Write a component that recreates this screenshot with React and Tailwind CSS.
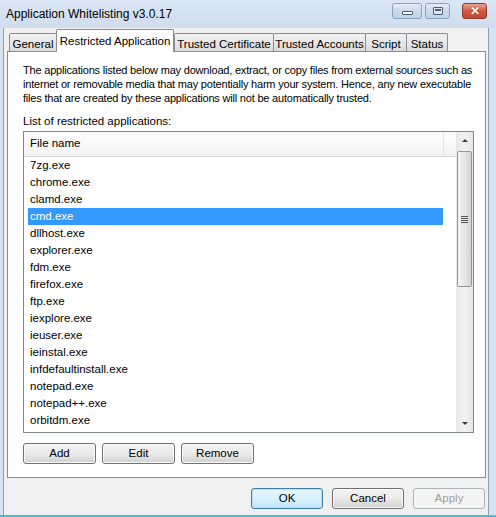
import React from "react";

const files = [
  "7zg.exe",
  "chrome.exe",
  "clamd.exe",
  "cmd.exe",
  "dllhost.exe",
  "explorer.exe",
  "fdm.exe",
  "firefox.exe",
  "ftp.exe",
  "iexplore.exe",
  "ieuser.exe",
  "ieinstal.exe",
  "infdefaultinstall.exe",
  "notepad.exe",
  "notepad++.exe",
  "orbitdm.exe",
];

const tabs = [
  { label: "General", w: "w-[48px]" },
  { label: "Restricted Application", w: "w-[118px]", active: true },
  { label: "Trusted Certificate", w: "w-[100px]" },
  { label: "Trusted Accounts", w: "w-[93px]" },
  { label: "Script", w: "w-[42px]" },
  { label: "Status", w: "w-[42px]" },
];

const Button = ({ children, className = "", disabled, primary }) => (
  <button
    className={`h-[21px] rounded-[3px] border leading-none ${
      disabled
        ? "border-[#adb2b5] bg-[#f4f4f4] text-[#a0a0a0]"
        : primary
        ? "border-[#3c7fb1] bg-gradient-to-b from-[#eaf6fd] via-[#d9f0fc] to-[#bee6fd] text-black shadow-[inset_0_0_0_1px_#b6e2f8]"
        : "border-[#707070] bg-gradient-to-b from-[#f2f2f2] via-[#ebebeb] to-[#cfcfcf] text-black shadow-[inset_0_0_0_1px_#fbfbfb]"
    } ${className}`}
  >
    {children}
  </button>
);

const CaptionButton = ({ children, className = "", close }) => (
  <div
    className={`flex h-[16px] items-center justify-center rounded-[3px] border ${
      close
        ? "border-[#8a3b2f] bg-gradient-to-b from-[#e8a493] via-[#d0583f] to-[#c44a33]"
        : "border-[#8aa0bd] bg-gradient-to-b from-[#e6eef8] via-[#cbd9ea] to-[#c2d3e8]"
    } ${className}`}
  >
    {children}
  </div>
);

export default function App() {
  return (
    <div
      className="flex h-[517px] w-[496px] flex-col overflow-hidden bg-[#d5e2f2] text-[11.5px] text-black"
      style={{ fontFamily: '"Liberation Sans", Arial, sans-serif' }}
    >
      {/* Title bar */}
      <div className="flex h-[28px] shrink-0 items-start bg-gradient-to-b from-[#dbe7f5] to-[#cfdced] pl-[6px] pr-[9px]">
        <span className="mt-[5px] whitespace-nowrap text-[12px] text-black">Application Whitelisting v3.0.17</span>
        <div className="ml-auto mt-[3px] flex gap-[3px]">
          <CaptionButton className="w-[30px]">
            <div className="mt-[4px] h-[4px] w-[11px] rounded-[1px] border border-[#4a5d78] bg-white" />
          </CaptionButton>
          <CaptionButton className="w-[25px]">
            <div className="h-[8px] w-[10px] rounded-[1px] border border-[#4a5d78] bg-[#dfe8f3] p-[1px]">
              <div className="h-full w-full border-t-[2px] border-[#4a5d78]" />
            </div>
          </CaptionButton>
          <div className="w-[6px]" />
          <CaptionButton close className="w-[25px]">
            <span className="text-[12px] font-bold leading-none text-white [text-shadow:0_0_1px_#5a1a10]">✕</span>
          </CaptionButton>
        </div>
      </div>

      {/* Client area */}
      <div className="ml-[3px] mr-[7px] flex flex-1 flex-col border-x border-[#8d9fb7] bg-[#f0f0f0] px-[3px]">
        {/* Tab strip */}
        <div className="relative z-10 flex h-[23px] items-end whitespace-nowrap pl-[2px]">
          {tabs.map((t) =>
            t.active ? (
              <div
                key={t.label}
                className={`${t.w} -mb-px flex h-[23px] items-start justify-center rounded-t-[2px] border border-b-0 border-[#898c95] bg-white pt-[3px]`}
              >
                {t.label}
              </div>
            ) : (
              <div
                key={t.label}
                className={`${t.w} -mr-px flex h-[18px] items-start justify-center rounded-t-[2px] border border-b-0 border-[#898c95] bg-gradient-to-b from-[#f2f2f2] to-[#dcdcdc] pt-[2px] last:mr-0`}
              >
                {t.label}
              </div>
            )
          )}
        </div>

        {/* Tab panel */}
        <div className="flex h-[427px] w-[479px] flex-col border border-[#898c95] bg-white px-[15px] pt-[11px]">
          <p className="whitespace-nowrap text-[11px] leading-[14px] tracking-[-0.2px]">
            The applications listed below may download, extract, or copy files from external sources such as
            <br />
            internet or removable media that may potentially harm your system. Hence, any new executable
            <br />
            files that are created by these applications will not be automatically trusted.
          </p>
          <p className="mt-[9px] leading-[14px]">List of restricted applications:</p>

          {/* List view */}
          <div className="mt-[3px] flex h-[302px] w-[451px] shrink-0 border border-[#828790] bg-white">
            <div className="flex flex-1 flex-col">
              <div className="flex h-[25px] items-center border-b border-[#d5d5d5] bg-gradient-to-b from-white to-[#f3f3f3]">
                <div className="flex h-full w-[420px] items-center border-r border-[#e3e4e6] pl-[6px]">
                  File name
                </div>
              </div>
              <ul className="flex flex-col pl-[4px]">
                {files.map((f) => (
                  <li
                    key={f}
                    className={`flex h-[17px] w-[415px] items-center pl-[2px] ${
                      f === "cmd.exe" ? "bg-[#3399ff] text-white" : ""
                    }`}
                  >
                    {f}
                  </li>
                ))}
              </ul>
            </div>

            {/* Scrollbar */}
            <div className="flex w-[17px] flex-col bg-gradient-to-r from-[#e7e7e7] via-[#f2f2f2] to-[#e7e7e7]">
              <div className="flex h-[17px] items-center justify-center">
                <div className="h-0 w-0 border-x-[3px] border-b-[3px] border-x-transparent border-b-[#3d3d3d]" />
              </div>
              <div className="mx-[1px] mt-[2px] flex h-[136px] items-center justify-center rounded-[2px] border border-[#979797] bg-gradient-to-r from-[#f3f3f3] via-[#e6e6e6] to-[#d3d3d3]">
                <div className="flex flex-col gap-[1px]">
                  <div className="h-px w-[7px] bg-[#555]" />
                  <div className="h-px w-[7px] bg-[#555]" />
                  <div className="h-px w-[7px] bg-[#555]" />
                  <div className="h-px w-[7px] bg-[#555]" />
                </div>
              </div>
              <div className="flex-1" />
              <div className="flex h-[17px] items-center justify-center">
                <div className="h-0 w-0 border-x-[3px] border-t-[3px] border-x-transparent border-t-[#3d3d3d]" />
              </div>
            </div>
          </div>

          <div className="mt-[10px] flex gap-[6px]">
            <Button className="w-[73px]">Add</Button>
            <Button className="w-[73px]">Edit</Button>
            <Button className="w-[73px]">Remove</Button>
          </div>
        </div>

        {/* Dialog buttons */}
        <div className="mt-[10px] flex justify-end gap-[9px]">
          <Button primary className="w-[72px]">OK</Button>
          <Button className="w-[72px]">Cancel</Button>
          <Button disabled className="w-[72px]">Apply</Button>
        </div>
      </div>
      <div className="h-[2px] shrink-0 bg-[#3cc3e3]" />
    </div>
  );
}
